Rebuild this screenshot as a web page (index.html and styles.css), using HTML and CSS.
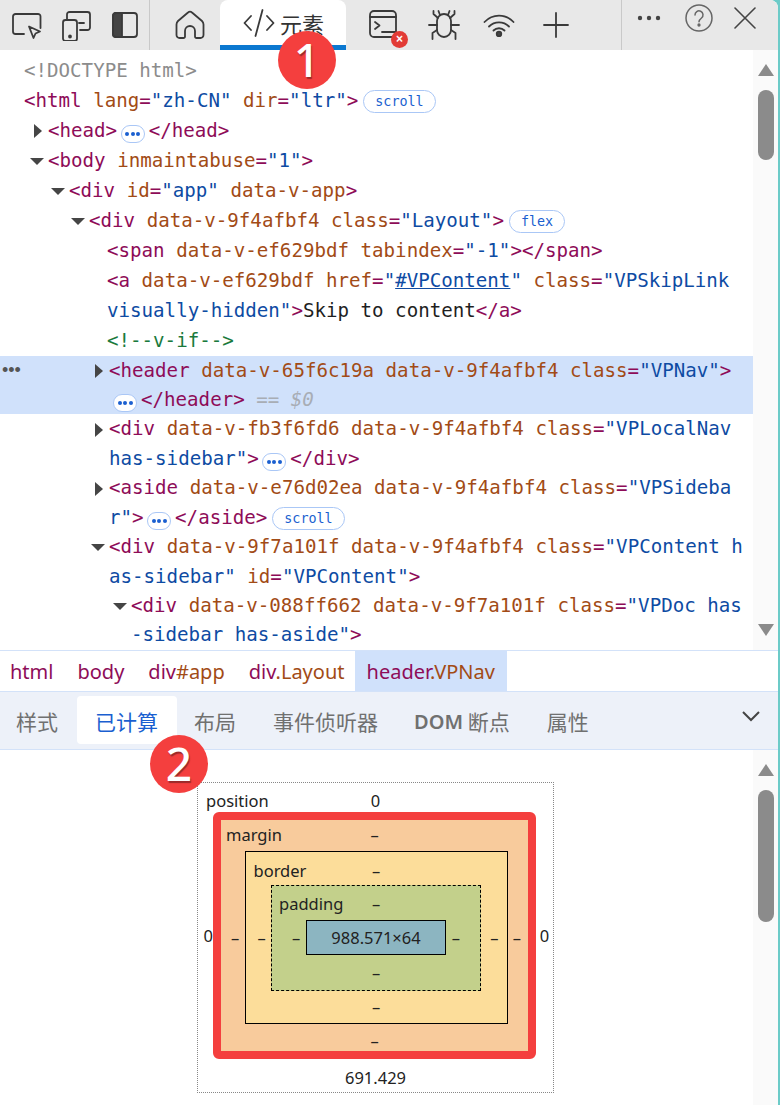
FILE: index.html
```html
<!DOCTYPE html>
<html lang="zh-CN">
<head>
<meta charset="utf-8">
<title>DevTools</title>
<link rel="stylesheet" href="styles.css">
</head>
<body>
<div class="app">
  <div class="toolbar">
    <div class="tool-group first">
      <svg class="ic" width="30" height="30" viewBox="0 0 30 30"><path d="M12 24H3.500A2.500 2.500 0 0 1 1 21.500V6.500A2.500 2.500 0 0 1 3.500 4H26a2.500 2.500 0 0 1 2.500 2.500V18"/><path d="M17 16.500l11 5-4.500 2-2 4.500z"/></svg>
      <svg class="ic" width="30" height="32" viewBox="0 0 30 32"><path d="M5 10V5.500A2.500 2.500 0 0 1 7.500 3h18A2.500 2.500 0 0 1 28 5.500v13a2.500 2.500 0 0 1-2.500 2.500H18"/><path d="M17 14h5"/><rect x="1" y="11" width="14" height="21" rx="2.500"/><circle class="solid" cx="8" cy="27.500" r="1"/></svg>
      <svg class="ic" width="26" height="26" viewBox="0 0 26 26"><path class="solid" d="M3.500 1H10v24H3.500A2.500 2.500 0 0 1 1 22.500v-19A2.500 2.500 0 0 1 3.500 1z"/><rect x="1" y="1" width="24" height="24" rx="3"/></svg>
    </div>
    <div class="sep"></div>
    <svg class="ic home" width="30" height="30" viewBox="0 0 30 30"><path d="M13 2.500L3 11a5 5 0 0 0-1.500 3.500V25a3 3 0 0 0 3 3h4a1.500 1.500 0 0 0 1.500-1.500V21a5 5 0 0 1 10 0v5.500a1.500 1.500 0 0 0 1.500 1.500h4a3 3 0 0 0 3-3V14.500A5 5 0 0 0 27 11L17 2.500a3 3 0 0 0-4 0z"/></svg>
    <div class="main-tab">
      <svg class="ic" width="32" height="28" viewBox="0 0 32 28"><path d="M8 7L1.500 14 8 21M24 7l6.500 7L24 21M19.500 1L12.500 27"/></svg>
      <span>元素</span>
    </div>
    <div class="console">
      <svg class="ic" width="28" height="28" viewBox="0 0 28 28"><rect x="1" y="1" width="26" height="26" rx="4"/><path d="M1 7h26M6 12l4.500 3.500L6 19M13 22h14"/></svg>
      <span class="err">×</span>
    </div>
    <svg class="ic bug" width="32" height="30" viewBox="0 0 32 30"><path d="M9 11a7 7 0 0 1 14 0v9a7 7 0 0 1-14 0z"/><path d="M10 8L5.500 4V1M22 8l4.500-4V1M12 5L10.500 1M20 5l1.500-4M1 15h8M23 15h8M9 20l-4.500 3v6M23 20l4.500 3v6"/></svg>
    <svg class="ic wifi" width="32" height="24" viewBox="0 0 32 24"><path d="M1.500 9c8-8.500 21-8.500 29 0M6 13.500c5.500-5.500 14.500-5.500 20 0M10.500 17.500c3-3 8-3 11 0"/><circle class="solid" cx="16" cy="21" r="2.300"/></svg>
    <svg class="ic plus" width="26" height="26" viewBox="0 0 26 26"><path d="M13 1v24M1 13h24"/></svg>
    <div class="sep sep-right"></div>
    <div class="tool-right">
      <svg class="ic-thin" width="24" height="8" viewBox="0 0 24 8"><circle cx="3" cy="4" r="2.200"/><circle cx="12" cy="4" r="2.200"/><circle cx="21" cy="4" r="2.200"/></svg>
      <svg class="ic help" width="28" height="28" viewBox="0 0 28 28"><circle cx="14" cy="14" r="13"/><path d="M10 11a4 4 0 1 1 6.500 3c-1.500 1.200-2.500 2-2.500 3.800"/><circle class="solid" cx="14" cy="21" r="0.900"/></svg>
      <svg class="ic close" width="22" height="22" viewBox="0 0 22 22"><path d="M1 1l20 20M21 1L1 21"/></svg>
    </div>
  </div>

  <div class="tree-pane">
    <div class="tree">
      <div class="row l0"><span class="doc">&lt;!DOCTYPE html&gt;</span></div>
      <div class="row l0"><span class="t">&lt;html</span> <span class="a">lang</span><span class="t">=</span><span class="v">"zh-CN"</span> <span class="a">dir</span><span class="t">=</span><span class="v">"ltr"</span><span class="t">&gt;</span><span class="badge">scroll</span></div>
      <div class="row l1"><i class="tw right"></i><span class="t">&lt;head&gt;</span><span class="dots"><b></b><b></b><b></b></span><span class="t">&lt;/head&gt;</span></div>
      <div class="row l1"><i class="tw down"></i><span class="t">&lt;body</span> <span class="a">inmaintabuse</span><span class="t">=</span><span class="v">"1"</span><span class="t">&gt;</span></div>
      <div class="row l2"><i class="tw down"></i><span class="t">&lt;div</span> <span class="a">id</span><span class="t">=</span><span class="v">"app"</span> <span class="a">data-v-app</span><span class="t">&gt;</span></div>
      <div class="row l3"><i class="tw down"></i><span class="t">&lt;div</span> <span class="a">data-v-9f4afbf4</span> <span class="a">class</span><span class="t">=</span><span class="v">"Layout"</span><span class="t">&gt;</span><span class="badge">flex</span></div>
      <div class="row l4"><span class="t">&lt;span</span> <span class="a">data-v-ef629bdf</span> <span class="a">tabindex</span><span class="t">=</span><span class="v">"-1"</span><span class="t">&gt;&lt;/span&gt;</span></div>
      <div class="row l4"><span class="t">&lt;a</span> <span class="a">data-v-ef629bdf</span> <span class="a">href</span><span class="t">=</span><span class="v">"</span><span class="link">#VPContent</span><span class="v">"</span> <span class="a">class</span><span class="t">=</span><span class="v">"VPSkipLink</span></div>
      <div class="row l4"><span class="v">visually-hidden"</span><span class="t">&gt;</span><span class="x">Skip to content</span><span class="t">&lt;/a&gt;</span></div>
      <div class="row l4"><span class="c">&lt;!--v-if--&gt;</span></div>
      <div class="sel">
        <span class="more">•••</span>
        <div class="row l5"><i class="tw right"></i><span class="t">&lt;header</span> <span class="a">data-v-65f6c19a</span> <span class="a">data-v-9f4afbf4</span> <span class="a">class</span><span class="t">=</span><span class="v">"VPNav"</span><span class="t">&gt;</span></div>
        <div class="row l5b"><span class="dots solid-badge"><b></b><b></b><b></b></span><span class="t">&lt;/header&gt;</span> <span class="eq">== <em>$0</em></span></div>
      </div>
      <div class="row l5"><i class="tw right"></i><span class="t">&lt;div</span> <span class="a">data-v-fb3f6fd6</span> <span class="a">data-v-9f4afbf4</span> <span class="a">class</span><span class="t">=</span><span class="v">"VPLocalNav</span></div>
      <div class="row l5"><span class="v">has-sidebar"</span><span class="t">&gt;</span><span class="dots"><b></b><b></b><b></b></span><span class="t">&lt;/div&gt;</span></div>
      <div class="row l5"><i class="tw right"></i><span class="t">&lt;aside</span> <span class="a">data-v-e76d02ea</span> <span class="a">data-v-9f4afbf4</span> <span class="a">class</span><span class="t">=</span><span class="v">"VPSideba</span></div>
      <div class="row l5"><span class="v">r"</span><span class="t">&gt;</span><span class="dots"><b></b><b></b><b></b></span><span class="t">&lt;/aside&gt;</span><span class="badge">scroll</span></div>
      <div class="row l5"><i class="tw down"></i><span class="t">&lt;div</span> <span class="a">data-v-9f7a101f</span> <span class="a">data-v-9f4afbf4</span> <span class="a">class</span><span class="t">=</span><span class="v">"VPContent h</span></div>
      <div class="row l5"><span class="v">as-sidebar"</span> <span class="a">id</span><span class="t">=</span><span class="v">"VPContent"</span><span class="t">&gt;</span></div>
      <div class="row l6"><i class="tw down"></i><span class="t">&lt;div</span> <span class="a">data-v-088ff662</span> <span class="a">data-v-9f7a101f</span> <span class="a">class</span><span class="t">=</span><span class="v">"VPDoc has</span></div>
      <div class="row l6"><span class="v">-sidebar has-aside"</span><span class="t">&gt;</span></div>
    </div>
    <div class="scrollbar">
      <i class="arrow up"></i>
      <div class="thumb thumb-top"></div>
      <i class="arrow dn"></i>
    </div>
  </div>

  <div class="crumbs">
    <span class="crumb"><span class="t">html</span></span>
    <span class="crumb"><span class="t">body</span></span>
    <span class="crumb"><span class="t">div</span><span class="a">#app</span></span>
    <span class="crumb"><span class="t">div</span><span class="a">.Layout</span></span>
    <span class="crumb on"><span class="t">header</span><span class="a">.VPNav</span></span>
  </div>

  <div class="tabs">
    <span class="tab">样式</span>
    <span class="tab active">已计算</span>
    <span class="tab">布局</span>
    <span class="tab wide">事件侦听器</span>
    <span class="tab"><b>DOM</b> 断点</span>
    <span class="tab wide">属性</span>
    <svg class="chev" width="18" height="11" viewBox="0 0 18 11"><path d="M1 1l8 8 8-8"/></svg>
  </div>

  <div class="computed">
    <div class="box-area">
      <div class="bm b-pos">
        <div class="top"><span class="lbl">position</span><span>0</span><span></span></div>
        <div class="mid">
          <span class="side-l">0</span>
          <div class="bm b-mar">
            <div class="top"><span class="lbl">margin</span><span>–</span><span></span></div>
            <div class="mid">
              <span>–</span>
              <div class="bm b-bor">
                <div class="top"><span class="lbl">border</span><span>–</span><span></span></div>
                <div class="mid">
                  <span>–</span>
                  <div class="bm b-pad">
                    <div class="top"><span class="lbl">padding</span><span>–</span><span></span></div>
                    <div class="mid">
                      <span>–</span>
                      <div class="b-con">988.571×64</div>
                      <span>–</span>
                    </div>
                    <div class="bot">–</div>
                  </div>
                  <span>–</span>
                </div>
                <div class="bot">–</div>
              </div>
              <span>–</span>
            </div>
            <div class="bot">–</div>
          </div>
          <span class="side-r">0</span>
        </div>
        <div class="bot">691.429</div>
      </div>
    </div>
    <div class="scrollbar">
      <i class="arrow up"></i>
      <div class="thumb thumb-low"></div>
    </div>
  </div>

  <div class="mark mark-1">1</div>
  <div class="mark mark-2">2</div>
</div>
</body>
</html>
```

FILE: styles.css
```css
* { box-sizing: border-box; }
html, body { margin: 0; height: 100%; overflow: hidden; background: #6ccbc8; }
.app {
  position: relative;
  width: 778px;
  height: 1105px;
  background: #fff;
  border-top-right-radius: 8px;
  overflow: hidden;
  display: flex;
  flex-direction: column;
}

/* toolbar */
.toolbar {
  height: 50px;
  flex: none;
  background: #e8e8e8;
  display: flex;
  align-items: center;
  color: #333;
}
.ic { fill: none; stroke: #3a3a3a; stroke-width: 1.800; stroke-linecap: round; stroke-linejoin: round; flex: none; }
.ic .solid, .ic-thin, .solid { fill: #444; }
.tool-group { display: flex; align-items: center; }
.tool-group.first { padding-left: 12px; gap: 20px; width: 149px; }
.sep { width: 1px; height: 50px; background: #c9c9c9; flex: none; }
.home { margin-left: 25px; }
.main-tab {
  margin-left: 15px;
  width: 126px;
  height: 50px;
  background: #fff;
  border-radius: 8px 8px 0 0;
  border-bottom: 5px solid #0b78d0;
  display: flex;
  align-items: center;
  padding-left: 23px;
  gap: 5px;
  font: 22px "Noto Sans CJK SC", sans-serif;
  color: #333;
}
.console { position: relative; margin-left: 23px; width: 28px; height: 28px; margin-top: -3px; }
.err {
  position: absolute;
  right: -11px;
  bottom: -10px;
  width: 17px;
  height: 17px;
  border-radius: 50%;
  background: #e23b36;
  color: #fff;
  font: bold 12px/17px "Liberation Sans", sans-serif;
  text-align: center;
}
.bug { margin-left: 31px; }
.wifi { margin-left: 23px; }
.plus { margin-left: 28px; }
.sep-right { margin-left: 52px; }
.tool-right { display: flex; align-items: center; height: 36px; margin-top: -14px; padding-left: 15px; }
.ic-thin { flex: none; }
.help { margin-left: 24px; stroke: #666; stroke-width: 1.500; }
.close { margin-left: 21px; stroke: #444; stroke-width: 1.600; }

/* tree */
.tree-pane { height: 600px; flex: none; display: flex; }
.tree {
  flex: 1;
  min-width: 0;
  padding-top: 5.500px;
  font: 19.150px/30px "DejaVu Sans Mono", monospace;
  overflow: hidden;
}
.row { height: 30px; line-height: 30px; white-space: pre; }
.sel .row, .sel ~ .row { height: 29.450px; line-height: 29.450px; }
.l0 { padding-left: 24px; }
.l1 { padding-left: 48px; }
.l2 { padding-left: 69px; }
.l3 { padding-left: 89px; }
.l4 { padding-left: 107px; }
.l5 { padding-left: 109px; }
.l5b { padding-left: 113px; }
.l6 { padding-left: 131px; }
.t { color: #8e0c58; }
.a { color: #a24b16; }
.v { color: #0e4ba3; }
.x { color: #1f1f1f; }
.c { color: #1a7a3c; }
.doc { color: #8c8c8c; }
.link { color: #0e4ba3; text-decoration: underline; }
.eq { color: #a8adb5; }
.eq em { font-style: italic; }
.tw { display: inline-block; width: 0; height: 0; border-style: solid; border-color: transparent; vertical-align: middle; }
.tw.right { border-width: 7px 0 7px 8px; border-left-color: #454545; margin-left: -14px; margin-right: 6px; }
.tw.down { border-width: 7px 7px 0 7px; border-top-color: #454545; margin-left: -18px; margin-right: 4px; }
.badge {
  display: inline-block;
  vertical-align: 1px;
  margin-left: 5px;
  height: 23px;
  padding: 0 11px;
  border: 1px solid #aac7f6;
  border-radius: 12px;
  font: 13.400px/21px "DejaVu Sans Mono", monospace;
  color: #1a5fd0;
  background: #fff;
}
.dots {
  display: inline-flex;
  align-items: center;
  justify-content: center;
  gap: 1.500px;
  width: 24px;
  height: 18px;
  margin: 0 4px 0 3.500px;
  border: 1px solid #aac7f6;
  border-radius: 9px;
  background: #fff;
  vertical-align: 0;
  position: relative;
  top: -1px;
}
.dots b { width: 4px; height: 4px; border-radius: 50%; background: #1a5fd0; }
.solid-badge { margin: 0 4px 0 0; }
.sel { position: relative; background: #d0e1fb; }
.more {
  position: absolute;
  left: 2px;
  top: 0;
  font: 18px/28px "Liberation Sans", sans-serif;
  color: #555;
}

/* scrollbars */
.scrollbar {
  width: 25px;
  flex: none;
  background: #fafafa;
  display: flex;
  flex-direction: column;
  align-items: center;
  padding-top: 14px;
}
.arrow { width: 0; height: 0; flex: none; border-style: solid; border-color: transparent; }
.arrow.up { border-width: 0 8.500px 12px; border-bottom-color: #8b8b8b; }
.arrow.dn { border-width: 12px 8.500px 0; border-top-color: #8b8b8b; margin-top: auto; margin-bottom: 14px; }
.thumb { width: 16px; background: #8b8b8b; border-radius: 8px; margin-top: 14px; }
.thumb-top { height: 70px; }
.thumb-low { height: 132px; }

/* breadcrumbs */
.crumbs {
  height: 42px;
  flex: none;
  border-top: 1px solid #d3e2f9;
  border-bottom: 1px solid #d3e2f9;
  display: flex;
  font: 20px/42px "Noto Sans", sans-serif;
}
.crumb { padding: 0 12px; }
.crumb:first-child { padding-left: 10px; }
.crumb.on { background: #d0e1fb; margin-left: -2px; }

/* tabs */
.tabs {
  height: 58px;
  flex: none;
  background: #edf1f9;
  border-bottom: 1px solid #d3e2f9;
  display: flex;
  align-items: center;
  padding: 4px 0 5px 0;
  font: 21px "Noto Sans CJK SC", sans-serif;
  color: #707070;
}
.tab {
  height: 100%;
  display: flex;
  align-items: center;
  padding: 2px 19px 0 17px;
  white-space: pre;
}
.tab:first-child { padding-left: 16px; }
.tab.wide { padding-left: 18px; }
.tab.active { background: #fff; border-radius: 4px; color: #1a5fd0; padding-left: 18px; }
.tab b { font: 600 20px "Noto Sans", sans-serif; }
.chev { margin-left: auto; margin-right: 18px; margin-top: -8px; fill: none; stroke: #444; stroke-width: 2; }

/* computed */
.computed { flex: 1; min-height: 0; display: flex; }
.box-area { flex: 1; padding: 32px 0 0 197px; }
.bm { font: 16.500px/20px "Noto Sans", sans-serif; color: #222; text-align: center; }
.top { display: grid; grid-template-columns: 1fr auto 1fr; align-items: center; text-align: left; }
.mid { display: flex; align-items: center; justify-content: space-between; }
.bot { text-align: center; }
.b-pos { width: 357px; height: 311px; border: 1px dotted #888; display: flex; flex-direction: column; }
.b-pos > .top { height: 29px; padding: 6px 8px 0; }
.b-pos > .mid { display: grid; grid-template-columns: 15px 323px 1fr; height: 247px; }
.side-l { text-align: right; }
.side-r { text-align: center; }
.b-pos > .bot { height: 33px; padding-top: 9px; }
.b-mar {
  width: 323px;
  height: 247px;
  background: #f8cb9c;
  border: 8px solid #f43f3e;
  border-radius: 6px;
  display: flex;
  flex-direction: column;
}
.b-mar > .top { height: 31px; padding: 0 5px 2px; }
.b-mar > .mid { padding: 0 7px 0 10px; }
.b-mar > .bot { height: 27px; padding-top: 7px; }
.b-bor {
  width: 263px;
  height: 173px;
  background: #fcdd9a;
  border: 1px solid #000;
  display: flex;
  flex-direction: column;
}
.b-bor > .top { height: 34px; padding: 5px 8px 0; }
.b-bor > .mid { padding: 0 8px 0 12px; }
.b-bor > .bot { height: 32px; padding-top: 6px; }
.b-pad {
  width: 210px;
  height: 106px;
  margin-right: 4px;
  background: #c3d08b;
  border: 1px dashed #000;
  display: flex;
  flex-direction: column;
}
.b-pad > .top { height: 34px; padding: 2px 7px 0; }
.b-pad > .mid { padding: 0 20px 0 20px; }
.b-pad > .bot { height: 35px; padding-top: 8px; }
.b-con {
  width: 140px;
  height: 35px;
  line-height: 33px;
  background: #8cb5c1;
  border: 1px solid #000;
  text-align: center;
}
.lbl { white-space: nowrap; }

/* annotation markers */
.mark {
  position: absolute;
  width: 58px;
  height: 58px;
  border-radius: 50%;
  background: #f43f3e;
  color: #fff;
  font: 500 46px/56px "Noto Sans", sans-serif;
  text-align: center;
  text-shadow: 1px 2px 1px #9b2a2a;
}
.mark-1 { left: 278px; top: 31px; }
.mark-2 { left: 150px; top: 735px; }
```
